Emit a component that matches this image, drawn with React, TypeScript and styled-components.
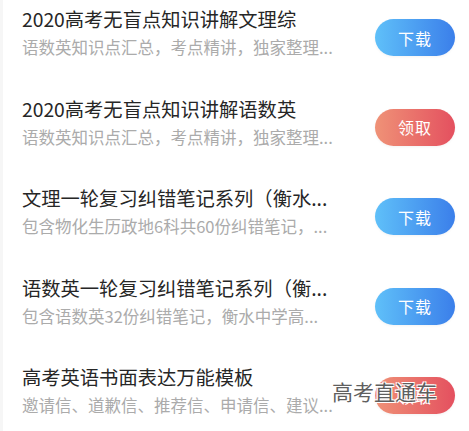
import styled, { createGlobalStyle } from "styled-components";

type Kind = "download" | "claim";

const ITEMS: { title: string; desc: string; kind: Kind }[] = [
  {
    title: "2020高考无盲点知识讲解文理综",
    desc: "语数英知识点汇总，考点精讲，独家整理...",
    kind: "download",
  },
  {
    title: "2020高考无盲点知识讲解语数英",
    desc: "语数英知识点汇总，考点精讲，独家整理...",
    kind: "claim",
  },
  {
    title: "文理一轮复习纠错笔记系列（衡水...",
    desc: "包含物化生历政地6科共60份纠错笔记，...",
    kind: "download",
  },
  {
    title: "语数英一轮复习纠错笔记系列（衡...",
    desc: "包含语数英32份纠错笔记，衡水中学高...",
    kind: "download",
  },
  {
    title: "高考英语书面表达万能模板",
    desc: "邀请信、道歉信、推荐信、申请信、建议...",
    kind: "claim",
  },
];

const BUTTON_TEXT: Record<Kind, string> = {
  download: "下载",
  claim: "领取",
};

const App = () => {
  return (
    <>
      <GlobalStyle />
      <Page>
        <List>
          {ITEMS.map((item, i) => (
            <Row key={i}>
              <Info>
                <Title>{item.title}</Title>
                <Desc>{item.desc}</Desc>
              </Info>
              <ActionButton $kind={item.kind}>{BUTTON_TEXT[item.kind]}</ActionButton>
            </Row>
          ))}
        </List>
        <Watermark>高考直通车</Watermark>
      </Page>
    </>
  );
};

const GlobalStyle = createGlobalStyle`
  html, body {
    margin: 0;
    padding: 0;
    background: #ffffff;
  }
  body {
    font-family: "Noto Sans CJK SC", "Noto Sans", sans-serif;
  }
`;

const Page = styled.div`
  position: relative;
  width: 469px;
  height: 431px;
  overflow: hidden;
  background: #ffffff;
  border-left: 3px solid #f6f6f6;
  box-sizing: border-box;
`;

const List = styled.div`
  display: flex;
  flex-direction: column;
`;

const Row = styled.div`
  display: flex;
  align-items: flex-start;
  justify-content: space-between;
  height: 89.5px;
  padding: 0 14px 0 19px;
  box-sizing: border-box;
`;

const Info = styled.div`
  display: flex;
  flex-direction: column;
  width: 320px;
  padding-top: 5px;
`;

const Title = styled.div`
  font-size: 19.3px;
  line-height: 28px;
  color: #262626;
  white-space: nowrap;
`;

const Desc = styled.div`
  margin-top: 3px;
  font-size: 16.5px;
  line-height: 22px;
  color: #ababab;
  white-space: nowrap;
`;

const ActionButton = styled.div<{ $kind: Kind }>`
  margin-top: 19px;
  width: 80px;
  height: 37px;
  border-radius: 19px;
  display: flex;
  align-items: center;
  justify-content: center;
  font-size: 16px;
  color: #ffffff;
  letter-spacing: 1px;
  background: ${({ $kind }) =>
    $kind === "download"
      ? "linear-gradient(90deg, #5fc0f9 0%, #3b7fea 100%)"
      : "linear-gradient(90deg, #ef9277 0%, #e4505f 100%)"};
  box-shadow: 0 1px 3px rgba(0, 0, 0, 0.05);
`;

const Watermark = styled.div`
  position: absolute;
  left: 329px;
  top: 377px;
  font-size: 21px;
  line-height: 28px;
  color: #5f5f5f;
  text-shadow: 1px 1px 0 #ffffff, -1px -1px 0 #ffffff, 1px -1px 0 #ffffff,
    -1px 1px 0 #ffffff;
`;

export default App;
